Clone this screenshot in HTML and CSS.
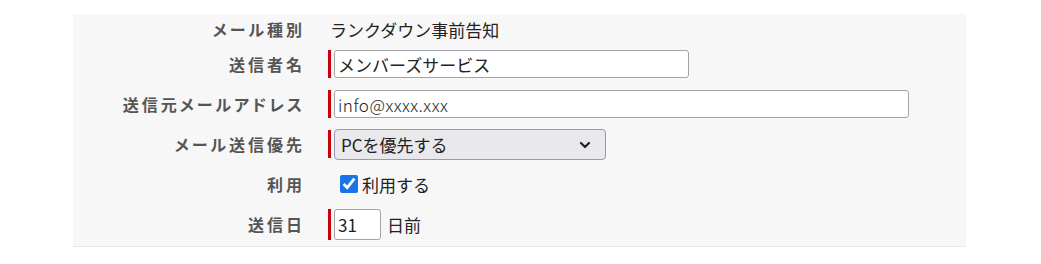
FILE: index.html
```html
<!DOCTYPE html>
<html lang="ja">
<head>
    <meta charset="UTF-8">
    <meta name="viewport" content="width=device-width, initial-scale=1.0">
    <title>メール設定</title>
    <link rel="stylesheet" href="styles.css">
</head>
<body>
    <div class="panel">
        <div class="row row-first">
            <div class="label">メール種別</div>
            <div class="value plain">ランクダウン事前告知</div>
        </div>
        <div class="row">
            <label class="label" for="sender-name">送信者名</label>
            <div class="value">
                <span class="req"></span>
                <input type="text" id="sender-name" class="field name-field" value="メンバーズサービス">
            </div>
        </div>
        <div class="row">
            <label class="label" for="sender-mail">送信元メールアドレス</label>
            <div class="value">
                <span class="req"></span>
                <input type="text" id="sender-mail" class="field mail-field" value="info@xxxx.xxx">
            </div>
        </div>
        <div class="row">
            <label class="label" for="priority">メール送信優先</label>
            <div class="value">
                <span class="req"></span>
                <div class="select-wrap">
                    <select id="priority" class="select">
                        <option>PCを優先する</option>
                        <option>携帯を優先する</option>
                    </select>
                    <svg class="chevron" width="12" height="8" viewBox="0 0 12 8">
                        <path d="M2 2l4 4 4-4" fill="none" stroke="#222" stroke-width="2.2" stroke-linecap="round" stroke-linejoin="round"/>
                    </svg>
                </div>
            </div>
        </div>
        <div class="row">
            <div class="label">利用</div>
            <div class="value">
                <label class="check">
                    <input type="checkbox" checked>
                    <span>利用する</span>
                </label>
            </div>
        </div>
        <div class="row">
            <label class="label" for="send-day">送信日</label>
            <div class="value">
                <span class="req tall"></span>
                <input type="text" id="send-day" class="field day-field" value="31">
                <span class="unit">日前</span>
            </div>
        </div>
    </div>
</body>
</html>
```

FILE: styles.css
```css
body {
    margin: 0;
    background-color: #fff;
    font-family: "Noto Sans CJK JP", "Noto Sans", sans-serif;
    color: #222;
}
.panel {
    width: 893px;
    margin: 14px 0 0 73px;
    padding-bottom: 2px;
    background-color: #f7f7f7;
    border-bottom: 1px solid #e8e8e8;
}
.row {
    display: grid;
    grid-template-columns: 229px 1fr;
    column-gap: 26px;
    align-items: center;
    height: 40px;
}
.row-first {
    height: 30px;
}
.label {
    text-align: right;
    font-size: 16px;
    font-weight: bold;
    color: #555;
    letter-spacing: 3px;
    margin-right: -3px;
    font-feature-settings: "palt";
}
.value {
    display: flex;
    align-items: center;
    font-size: 17px;
}
.plain {
    padding-left: 2px;
}
.req {
    width: 3px;
    height: 28px;
    background-color: #c8000a;
    margin-right: 3px;
}
.req.tall {
    height: 31px;
}
.field {
    box-sizing: border-box;
    height: 28px;
    margin: 0;
    padding: 0 3px;
    border: 1px solid #a3a3ab;
    border-radius: 3px;
    background-color: #fff;
    font-family: inherit;
    font-size: 17px;
    color: #222;
}
.name-field {
    width: 355px;
}
.mail-field {
    width: 575px;
    font-weight: 300;
    letter-spacing: 0.5px;
}
.day-field {
    width: 47px;
    height: 31px;
}
.unit {
    margin-left: 6px;
}
.select-wrap {
    position: relative;
}
.select {
    appearance: none;
    box-sizing: border-box;
    width: 272px;
    height: 31px;
    margin: 0;
    padding: 0 6px;
    border: 1px solid #9a9aa6;
    border-radius: 4px;
    background-color: #e9e9ed;
    font-family: inherit;
    font-size: 17px;
    color: #222;
}
.chevron {
    position: absolute;
    right: 15px;
    top: 12px;
    pointer-events: none;
}
.check {
    display: flex;
    align-items: center;
    margin-left: 12px;
}
.check input {
    width: 18px;
    height: 18px;
    margin: 0 4px 0 0;
    accent-color: #1a73e8;
}
```
